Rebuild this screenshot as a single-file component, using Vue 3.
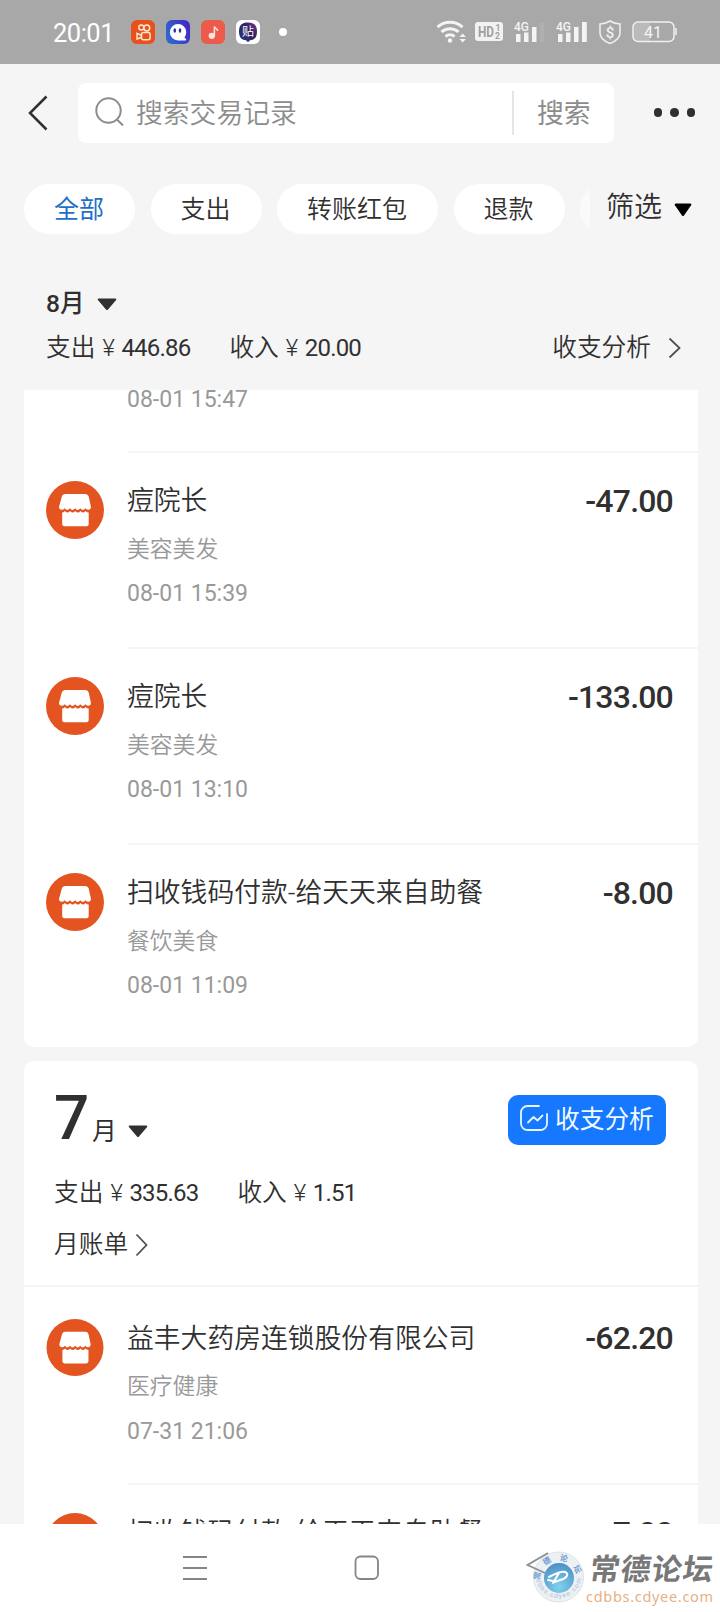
<script setup>
const chips = ['全部', '支出', '转账红包', '退款']
const august = [
  { title: '痘院长', kind: '美容美发', time: '08-01 15:39', amount: '-47.00' },
  { title: '痘院长', kind: '美容美发', time: '08-01 13:10', amount: '-133.00' },
  { title: '扫收钱码付款-给天天来自助餐', kind: '餐饮美食', time: '08-01 11:09', amount: '-8.00' }
]
const july = [
  { title: '益丰大药房连锁股份有限公司', kind: '医疗健康', time: '07-31 21:06', amount: '-62.20' },
  { title: '扫收钱码付款-给天天来自助餐', kind: '餐饮美食', time: '07-31 11:32', amount: '-7.00' }
]
const roof = 'M19 13h20.500q2.500 0 3.200 2.500L45 26q0 2.500-2.500 2.800-1.700 0-3-1.600-2.600 3.600-5.200 0-2.600 3.600-5.200 0-2.600 3.600-5.200 0-2.600 3.600-5.200 0-1.300 1.600-3 1.600-2.700-.3-2.700-2.800L15.800 15.500Q16.500 13 19 13z'
const walls = 'M16.200 31.500q1.500 0 2.700-1.500 2.600 3.200 5.200 0 2.600 3.200 5.200 0 2.600 3.200 5.200 0 2.600 3.200 5.200 0 1.200 1.500 3 1.500V43q0 2.200-2.200 2.200H18.400q-2.200 0-2.200-2.200z'
</script>

<template>
  <div class="screen">
    <header class="status">
      <span class="clock">20:01</span>
      <div class="apps">
        <svg width="24" height="24" viewBox="0 0 24 24">
          <rect width="24" height="24" rx="6" fill="#e8501c" />
          <g fill="none" stroke="#ffe6d0" stroke-width="1.5">
            <circle cx="10.3" cy="7.6" r="2.5" /><circle cx="15.8" cy="8" r="2.9" />
            <rect x="10.5" y="12.6" width="8.6" height="7.2" rx="2" />
            <path d="M10.3 15.2 6 13.4v5.6l4.3-1.8" />
          </g>
        </svg>
        <svg width="24" height="24" viewBox="0 0 24 24">
          <defs>
            <linearGradient id="chatBg" x1="0" y1="0.6" x2="1" y2="0.2">
              <stop offset="0" stop-color="#2d67cf" /><stop offset="1" stop-color="#4226c8" />
            </linearGradient>
          </defs>
          <rect width="24" height="24" rx="6" fill="url(#chatBg)" />
          <path d="M12 4a8.200 8.200 0 0 1 8.200 8c0 2.500-.8 4.200-1.800 5.400l1.600 1.600c.5.700.2 1.400-.6 1.400H12A8.200 8.200 0 0 1 12 4z" fill="#fff" />
          <ellipse cx="8.800" cy="10.500" rx="1.300" ry="2.300" fill="#27399e" />
          <ellipse cx="14" cy="10.500" rx="1.300" ry="2.300" fill="#27399e" />
        </svg>
        <svg width="24" height="24" viewBox="0 0 24 24">
          <rect width="24" height="24" rx="6" fill="#ec5a4b" />
          <ellipse cx="10.800" cy="15.800" rx="3.200" ry="3.100" fill="#ffe1da" />
          <path d="M13.400 16V6.500c.4 2 3 2 3.300 4.500" fill="none" stroke="#ffe1da" stroke-width="1.500" />
        </svg>
        <svg width="24" height="24" viewBox="0 0 24 24">
          <defs>
            <linearGradient id="postBg" x1="0" y1="1" x2="1" y2="0">
              <stop offset="0" stop-color="#253a8c" /><stop offset="0.600" stop-color="#34205c" /><stop offset="1" stop-color="#7b3a9a" />
            </linearGradient>
          </defs>
          <rect width="24" height="24" rx="6" fill="#fff" />
          <path d="M12 2.500c6 0 9 2.500 9 9s-3 8.500-7 8.800L12 22.300l-2-2c-4-.3-7-2.300-7-8.800s3-9 9-9z" fill="url(#postBg)" />
          <text x="12" y="16" font-size="12" text-anchor="middle" fill="#fff" class="svgtext">贴</text>
        </svg>
      </div>
      <i class="notice"></i>
      <div class="system">
        <svg width="31" height="24" viewBox="0 0 31 24">
          <g fill="none" stroke="#f4f4f4" stroke-width="3">
            <path d="M1.500 7.200a18.500 18.500 0 0 1 25 0" />
            <path d="M5.500 12a12.500 12.500 0 0 1 17 0" />
            <path d="M9.500 16.600a6.600 6.600 0 0 1 9 0" />
          </g>
          <circle cx="14" cy="20.500" r="2.200" fill="#f4f4f4" />
          <path d="M23.500 17l3.200-3.500 3.200 3.500zM23.500 19l3.200 3.500 3.200-3.500z" fill="#f4f4f4" />
        </svg>
        <svg class="hd" width="28" height="20" viewBox="0 0 28 20">
          <rect width="28" height="19" rx="3" fill="#f2f2f2" />
          <text x="3" y="14.500" font-size="14" textLength="16" lengthAdjust="spacingAndGlyphs" font-weight="700" fill="#a0a0a0" class="svgtext">HD</text>
          <text x="20.500" y="9" font-size="8.500" font-weight="700" fill="#a0a0a0" class="svgtext">1</text>
          <text x="20" y="17" font-size="8.500" font-weight="700" fill="#a0a0a0" class="svgtext">2</text>
        </svg>
        <svg class="sig1" width="32" height="24" viewBox="0 0 32 24">
          <text x="0" y="10.500" font-size="13" textLength="15" lengthAdjust="spacingAndGlyphs" font-weight="500" fill="#f4f4f4" class="svgtext">4G</text>
          <path d="M2 14h4.500v8H2zM10 12.500h4.500V22h-4.500zM18 7h4.500v15h-4.500z" fill="#f4f4f4" />
          <path d="M26 3h4v19h-4z" fill="#b0b0b0" />
        </svg>
        <svg class="sig2" width="32" height="24" viewBox="0 0 32 24">
          <text x="0" y="10.500" font-size="13" textLength="15" lengthAdjust="spacingAndGlyphs" font-weight="500" fill="#f4f4f4" class="svgtext">4G</text>
          <path d="M2 14h4.500v8H2zM10 12.500h4.500V22h-4.500zM18 7h4.500v15h-4.500zM26 2h4.800v20H26z" fill="#f4f4f4" />
        </svg>
        <svg class="shield" width="22" height="24" viewBox="0 0 22 24">
          <path d="M11 1c3 2 6 2.700 10 3v9c0 5-5 8.500-10 10.500C6 21.500 1 18 1 13V4c4-.3 7-1 10-3z" fill="none" stroke="#eee" stroke-width="1.600" />
          <text x="11" y="17.500" font-size="15" font-weight="500" text-anchor="middle" fill="#f0f0f0" class="svgtext">$</text>
        </svg>
        <svg class="battery" width="46" height="22" viewBox="0 0 46 22">
          <path d="M6 2h12v18H6a4 4 0 0 1-4-4V6a4 4 0 0 1 4-4z" fill="#bababa" />
          <rect x="1" y="1" width="41" height="19.500" rx="5" fill="none" stroke="#f0f0f0" stroke-width="1.500" />
          <path d="M44 7v7" stroke="#eee" stroke-width="1.600" />
          <text x="21" y="16.500" font-size="16" textLength="18" lengthAdjust="spacingAndGlyphs" text-anchor="middle" fill="#f4f4f4" class="svgtext">41</text>
        </svg>
      </div>
    </header>

    <div class="searchbar">
      <svg class="back" width="20" height="36" viewBox="0 0 20 36">
        <path d="M18.500 1.500 2 18l16.500 16.500" fill="none" stroke="#303030" stroke-width="2.500" />
      </svg>
      <div class="field">
        <svg width="30" height="30" viewBox="0 0 30 30">
          <g fill="none" stroke="#8c8c8c" stroke-width="2">
            <circle cx="13.500" cy="13.500" r="12.200" /><path d="M22 22.500l6 6" />
          </g>
        </svg>
        <span class="hint">搜索交易记录</span>
        <span class="go">搜索</span>
      </div>
      <div class="more"><i></i><i></i><i></i></div>
    </div>

    <div class="filters">
      <div class="chips">
        <span v-for="(c, i) in chips" :key="c" class="chip" :class="{ on: i === 0 }">{{ c }}</span>
        <span class="chip peek"></span>
      </div>
      <div class="pick">筛选
        <svg width="18" height="14" viewBox="0 0 18 14"><path d="M1.500.5h15q1.500.5.6 1.800L10 12.500q-1 1-2 0L.9 2.300Q0 1 1.500.5z" fill="#000" /></svg>
      </div>
    </div>

    <section class="summary">
      <div class="month">8月
        <svg width="20" height="13" viewBox="0 0 20 13"><path d="M1.500.5h17q1.500.5.6 1.600L11 11.500q-1 1-2 0L.9 2.100Q0 1 1.500.5z" fill="#303030" /></svg>
      </div>
      <div class="totals">
        <span>支出</span><span class="yen">¥</span><span class="num">446.86</span>
        <span class="in">收入</span><span class="yen">¥</span><span class="num">20.00</span>
        <span class="analysis">收支分析</span>
        <svg width="14" height="22" viewBox="0 0 14 22"><path d="M1.500 1.500 11.500 11 1.500 20.500" fill="none" stroke="#505050" stroke-width="1.800" /></svg>
      </div>
    </section>

    <main class="list">
      <section class="panel first">
        <div class="cut">08-01 15:47</div>
        <article v-for="r in august" :key="r.time" class="row">
          <svg class="shop" width="58" height="58" viewBox="0 0 58 58">
            <circle cx="29" cy="29" r="29" fill="#e45420" />
            <path :d="roof" fill="#fff" /><path :d="walls" fill="#fff" />
          </svg>
          <div class="body">
            <div class="text"><h3>{{ r.title }}</h3><p>{{ r.kind }}</p><time>{{ r.time }}</time></div>
            <b>{{ r.amount }}</b>
          </div>
        </article>
      </section>

      <section class="panel second">
        <div class="head">
          <div class="big">
            <strong>7</strong><span>月</span>
            <svg width="20" height="13" viewBox="0 0 20 13"><path d="M1.500.5h17q1.500.5.6 1.600L11 11.500q-1 1-2 0L.9 2.100Q0 1 1.500.5z" fill="#303030" /></svg>
            <div class="btn">
              <svg width="30" height="28" viewBox="0 0 30 28" fill="none" stroke="#e6f6ff" stroke-width="1.800" stroke-linecap="round">
                <path d="M20 2H8.500A6.500 6.500 0 0 0 2 8.500v11A6.500 6.500 0 0 0 8.500 26h13a6.500 6.500 0 0 0 6.500-6.500V10" />
                <path d="M9 18.500l5.500-5.500 4 3.500 5-5" stroke-linejoin="round" />
              </svg>
              <span>收支分析</span>
            </div>
          </div>
          <div class="totals">
            <span>支出</span><span class="yen">¥</span><span class="num">335.63</span>
            <span class="in">收入</span><span class="yen">¥</span><span class="num">1.51</span>
          </div>
          <div class="bill">月账单
            <svg width="14" height="24" viewBox="0 0 14 24"><path d="M1.500 1.500 11.500 12 1.500 22.500" fill="none" stroke="#505050" stroke-width="1.800" /></svg>
          </div>
        </div>
        <article v-for="r in july" :key="r.time" class="row">
          <svg class="shop" width="58" height="58" viewBox="0 0 58 58">
            <circle cx="29" cy="29" r="29" fill="#e45420" />
            <path :d="roof" fill="#fff" /><path :d="walls" fill="#fff" />
          </svg>
          <div class="body">
            <div class="text"><h3>{{ r.title }}</h3><p>{{ r.kind }}</p><time>{{ r.time }}</time></div>
            <b>{{ r.amount }}</b>
          </div>
        </article>
      </section>
    </main>

    <footer class="nav">
      <svg class="menu" width="24" height="26" viewBox="0 0 24 26"><path d="M0 2h24M0 13h24M0 24h24" stroke="#858585" stroke-width="1.800" /></svg>
      <svg class="home" width="26" height="26" viewBox="0 0 26 26"><rect x="1.500" y="1.500" width="22.500" height="22.500" rx="5" fill="none" stroke="#858585" stroke-width="1.800" /></svg>
      <div class="mark">
        <svg width="60" height="56" viewBox="0 0 60 56">
          <defs>
            <radialGradient id="orb" cx="0.500" cy="0.800" r="0.800">
              <stop offset="0" stop-color="#7fd3ee" /><stop offset="1" stop-color="#4c8fc6" />
            </radialGradient>
            <path id="upper" d="M14 31a18.500 18.500 0 0 1 37-2" />
            <path id="lower" d="M9.500 26a23 23 0 0 0 46 0" />
          </defs>
          <circle cx="32.500" cy="28" r="25" fill="#eef1f4" stroke="#dde2e8" />
          <path d="M22 4 1.500 16 19 24" fill="none" stroke="#8f8f8f" stroke-width="1.800" />
          <circle cx="33" cy="29" r="15" fill="url(#orb)" />
          <path d="M23 28c6-3 12-6 16-5 5 2 1 7-5 8l-5 2M33 24l-6 10M27 32l-5-1" fill="none" stroke="#fff" stroke-width="2" stroke-linecap="round" />
          <text font-size="8" font-weight="700" fill="#6c9bd4" class="svgtext"><textPath href="#upper" textLength="54">常德论坛</textPath></text>
          <text font-size="6.500" fill="#a9bdd6" class="svgtext"><textPath href="#lower" textLength="68">cdbbs.cdyee.com</textPath></text>
        </svg>
        <div class="brand"><span class="name">常德论坛</span><span class="site">cdbbs.cdyee.com</span></div>
      </div>
    </footer>
  </div>
</template>

<style>
body { margin: 0; background: #f5f5f5; }
</style>

<style scoped>
.screen { width: 720px; height: 1612px; overflow: hidden; display: flex; flex-direction: column; background: #f5f5f5; color: #303030; font-family: Roboto, "Noto Sans CJK SC", sans-serif; }
.screen * { box-sizing: border-box; }
svg { display: block; flex: none; }
.svgtext { font-family: Roboto, "Noto Sans CJK SC", sans-serif; }
.status { height: 64px; flex: none; background: #a8a8a8; display: flex; align-items: center; padding-left: 53px; }
.clock { width: 78px; font-size: 25.500px; line-height: 64px; padding-top: 2px; color: #fff; letter-spacing: -.5px; }
.apps { display: flex; gap: 11px; }
.notice { width: 8px; height: 8px; border-radius: 50%; background: #fff; margin-left: 19px; }
.system { display: flex; align-items: center; margin-left: 149px; }
.hd { margin-left: 8px; }
.sig1 { margin-left: 11px; }
.sig2 { margin-left: 10px; }
.shield { margin-left: 11px; }
.battery { margin-left: 11px; }
.searchbar { height: 97px; margin-bottom: 1px; flex: none; display: flex; align-items: center; padding: 0 25px 0 28px; }
.field { margin-left: 30px; width: 536px; height: 60px; background: #fff; border-radius: 8px; display: flex; align-items: center; padding-left: 17px; font-size: 26.800px; font-weight: 350; color: #8c8c8c; }
.field svg { margin-top: -1px; }
.hint { margin-left: 11px; flex: 1; line-height: 44px; padding-top: 2px; }
.go { width: 102px; height: 44px; line-height: 46px; border-left: 2px solid #e6e6e6; padding-left: 23px; font-weight: 400; }
.more { margin-left: auto; display: flex; gap: 8px; }
.more i { width: 8.500px; height: 8.500px; border-radius: 50%; background: #303030; }
.filters { height: 94px; flex: none; display: flex; align-items: center; padding-left: 24px; }
.chips { display: flex; gap: 15.500px; width: 566px; overflow: hidden; }
.chip { flex: none; height: 50px; padding: 0 31px 0 30px; border-radius: 25px; background: #fff; font-size: 25px; line-height: 52px; font-weight: 350; }
.chip.on { color: #1f6fc9; font-weight: 400; }
.chip.peek { opacity: .5; width: 100px; }
.pick { margin-left: 16px; display: flex; align-items: center; gap: 12px; font-size: 28px; line-height: 40px; font-weight: 350; margin-top: -3px; }
.pick svg { margin-top: 4px; }
.summary { height: 134px; flex: none; padding: 28px 38px 0 46px; }
.month { display: flex; align-items: center; gap: 13px; font-size: 24.500px; line-height: 40px; font-weight: 500; }
.totals { display: flex; align-items: center; font-size: 24.700px; line-height: 40px; font-weight: 350; margin-top: 4px; }
.yen { margin-left: 7px; width: 19px; font-weight: 300; font-size: 24px; }
.num { font-size: 24px; font-weight: 400; letter-spacing: -.8px; }
.in { margin-left: 39px; }
.analysis { margin-left: auto; margin-right: 17px; }
.list { height: 1134px; flex: none; overflow: hidden; padding: 0 22px 0 24px; }
.panel { background: #fff; }
.first { height: 657px; border-radius: 0 0 10px 10px; }
.second { margin-top: 14px; border-radius: 10px 10px 0 0; }
.cut { height: 61px; padding-left: 103px; font-size: 23px; line-height: 20px; color: #999; }
.row { height: 196px; display: flex; padding-left: 22px; }
.shop { margin-top: 30px; }
.body { flex: 1; margin-left: 24px; border-top: 2px solid #f5f5f5; padding: 28px 25px 0 0; display: flex; justify-content: space-between; }
.text { margin-left: -1px; }
h3 { margin: 0; font-size: 26.800px; line-height: 40px; font-weight: 350; }
p { margin: 9px 0 0; font-size: 22.800px; line-height: 40px; color: #999; font-weight: 350; }
time { display: block; margin-top: 4px; font-size: 23px; line-height: 40px; color: #999; }
b { font-size: 32px; line-height: 44px; font-weight: 500; letter-spacing: -.8px; margin-top: -2px; }
.head { height: 226px; padding: 34px 32px 0 30px; border-bottom: 2px solid #f5f5f5; }
.big { height: 50px; display: flex; align-items: flex-start; }
.big strong { font-size: 62px; line-height: 46px; font-weight: 500; width: 38px; }
.big span { font-size: 24.700px; line-height: 74px; }
.big > svg { margin: 30px 0 0 11px; }
.btn { margin-left: auto; width: 158px; height: 50px; border-radius: 10px; background: #1677ff; display: flex; padding: 9px 0 0 11px; gap: 6px; }
.btn span { color: #f0faff; line-height: 32px; font-weight: 400; }
.head .totals { margin-top: 28px; }
.bill { display: flex; align-items: center; gap: 7px; margin-top: 12px; font-size: 24.700px; line-height: 40px; font-weight: 350; }
.second .row:nth-of-type(1) { height: 198px; margin-top: -2px; }
.second .row:nth-of-type(1) .shop { margin-top: 34px; height: 57px; }
.second .row:nth-of-type(1) .body { border-top: 0; padding-top: 34px; }
.second .row:nth-of-type(1) b { margin-top: -3px; }
.second .row:nth-of-type(1) p { margin-top: 8px; }
.second .row:nth-of-type(1) time { margin-top: 5px; }
.nav { height: 88px; flex: none; background: #fff; display: flex; align-items: center; padding-left: 183px; }
.home { margin-left: 147px; }
.mark { margin-left: 146px; display: flex; align-items: center; padding-top: 17px; }
.brand { display: flex; flex-direction: column; margin-left: 4px; padding-top: 4px; }
.name { font-size: 30px; line-height: 36px; font-weight: 700; color: #787878; letter-spacing: 1px; transform: skewX(-8deg); white-space: nowrap; }
.site { font-family: "Noto Sans", sans-serif; font-size: 14.500px; line-height: 17px; color: #e8b084; letter-spacing: .7px; margin-left: -4px; }
</style>
